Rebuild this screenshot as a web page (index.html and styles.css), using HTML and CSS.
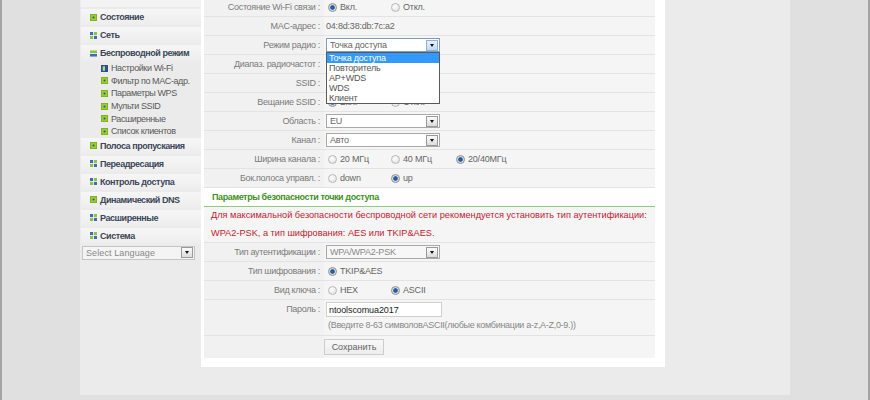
FILE: index.html
```html
<!DOCTYPE html>
<html lang="ru">
<head>
    <meta charset="UTF-8">
    <title>Настройки Wi-Fi</title>
    <link rel="stylesheet" href="styles.css">
</head>
<body>
    <svg class="defs" width="0" height="0">
        <symbol id="i-dot" viewBox="0 0 8 8">
            <rect x="0" y="0" width="8" height="8" fill="#9acd32"/>
            <rect x="0.5" y="0.5" width="7" height="7" fill="none" stroke="#7fb01e"/>
            <rect x="3" y="3" width="2" height="2" fill="#2b4fa0"/>
        </symbol>
        <symbol id="i-grid" viewBox="0 0 8 8">
            <rect x="0" y="0" width="3.5" height="3.5" fill="#3b6cc0"/>
            <rect x="4.5" y="0" width="3.5" height="3.5" fill="#8cc43c"/>
            <rect x="0" y="4.5" width="3.5" height="3.5" fill="#8cc43c"/>
            <rect x="4.5" y="4.5" width="3.5" height="3.5" fill="#3b6cc0"/>
        </symbol>
        <symbol id="i-open" viewBox="0 0 8 8">
            <rect x="0" y="0.5" width="8" height="3" fill="#8cc43c"/>
            <rect x="0" y="4.5" width="8" height="3" fill="#3b6cc0"/>
        </symbol>
        <symbol id="i-cur" viewBox="0 0 8 8">
            <rect x="0" y="0" width="8" height="8" fill="#2b4fa0"/>
            <rect x="2" y="1.5" width="2.5" height="5" fill="#c8e05a"/>
        </symbol>
    </svg>

    <div class="page">
        <div class="sidebar">
            <div class="menu-stub"></div>
            <a class="menu-item"><svg class="ico"><use href="#i-dot"/></svg>Состояние</a>
            <a class="menu-item"><svg class="ico"><use href="#i-grid"/></svg>Сеть</a>
            <a class="menu-item open"><svg class="ico"><use href="#i-open"/></svg>Беспроводной режим</a>
            <div class="submenu">
                <a class="sub-item"><svg class="ico"><use href="#i-cur"/></svg>Настройки Wi-Fi</a>
                <a class="sub-item"><svg class="ico"><use href="#i-dot"/></svg>Фильтр по MAC-адр.</a>
                <a class="sub-item"><svg class="ico"><use href="#i-dot"/></svg>Параметры WPS</a>
                <a class="sub-item"><svg class="ico"><use href="#i-dot"/></svg>Мульти SSID</a>
                <a class="sub-item"><svg class="ico"><use href="#i-dot"/></svg>Расширенные</a>
                <a class="sub-item"><svg class="ico"><use href="#i-dot"/></svg>Список клиентов</a>
            </div>
            <a class="menu-item"><svg class="ico"><use href="#i-dot"/></svg>Полоса пропускания</a>
            <a class="menu-item"><svg class="ico"><use href="#i-grid"/></svg>Переадресация</a>
            <a class="menu-item"><svg class="ico"><use href="#i-grid"/></svg>Контроль доступа</a>
            <a class="menu-item"><svg class="ico"><use href="#i-dot"/></svg>Динамический DNS</a>
            <a class="menu-item"><svg class="ico"><use href="#i-grid"/></svg>Расширенные</a>
            <a class="menu-item"><svg class="ico"><use href="#i-grid"/></svg>Система</a>
            <div class="lang-select">
                <span class="select-text">Select Language</span>
                <span class="select-btn"></span>
            </div>
        </div>

        <div class="content">
            <div class="card">
                <div class="form-row">
                    <div class="label">Состояние Wi-Fi связи :</div>
                    <div class="value">
                        <span class="opt"><span class="radio checked"></span>Вкл.</span>
                        <span class="opt"><span class="radio"></span>Откл.</span>
                    </div>
                </div>
                <div class="form-row">
                    <div class="label">MAC-адрес :</div>
                    <div class="value">04:8d:38:db:7c:a2</div>
                </div>
                <div class="form-row">
                    <div class="label">Режим радио :</div>
                    <div class="value">
                        <div class="select focused">
                            <span class="select-text">Точка доступа</span>
                            <span class="select-btn"></span>
                            <div class="dropdown">
                                <div class="dropdown-item selected">Точка доступа</div>
                                <div class="dropdown-item">Повторитель</div>
                                <div class="dropdown-item">AP+WDS</div>
                                <div class="dropdown-item">WDS</div>
                                <div class="dropdown-item">Клиент</div>
                            </div>
                        </div>
                    </div>
                </div>
                <div class="form-row">
                    <div class="label">Диапаз. радиочастот :</div>
                    <div class="value"></div>
                </div>
                <div class="form-row">
                    <div class="label">SSID :</div>
                    <div class="value"></div>
                </div>
                <div class="form-row">
                    <div class="label">Вещание SSID :</div>
                    <div class="value">
                        <span class="opt"><span class="radio checked"></span>Вкл.</span>
                        <span class="opt"><span class="radio"></span>Откл.</span>
                    </div>
                </div>
                <div class="form-row">
                    <div class="label">Область :</div>
                    <div class="value">
                        <div class="select"><span class="select-text">EU</span><span class="select-btn"></span></div>
                    </div>
                </div>
                <div class="form-row">
                    <div class="label">Канал :</div>
                    <div class="value">
                        <div class="select"><span class="select-text">Авто</span><span class="select-btn"></span></div>
                    </div>
                </div>
                <div class="form-row">
                    <div class="label">Ширина канала :</div>
                    <div class="value">
                        <span class="opt"><span class="radio"></span>20 МГц</span>
                        <span class="opt"><span class="radio"></span>40 МГц</span>
                        <span class="opt"><span class="radio checked"></span>20/40МГц</span>
                    </div>
                </div>
                <div class="form-row">
                    <div class="label">Бок.полоса управл. :</div>
                    <div class="value">
                        <span class="opt"><span class="radio"></span>down</span>
                        <span class="opt"><span class="radio checked"></span>up</span>
                    </div>
                </div>

                <div class="section-title">Параметры безопасности точки доступа</div>
                <div class="notice">
                    <p>Для максимальной безопасности беспроводной сети рекомендуется установить тип аутентификации:</p>
                    <p>WPA2-PSK, а тип шифрования: AES или TKIP&amp;AES.</p>
                </div>

                <div class="form-row">
                    <div class="label">Тип аутентификации :</div>
                    <div class="value">
                        <div class="select disabled"><span class="select-text">WPA/WPA2-PSK</span><span class="select-btn"></span></div>
                    </div>
                </div>
                <div class="form-row">
                    <div class="label">Тип шифрования :</div>
                    <div class="value">
                        <span class="opt"><span class="radio checked"></span>TKIP&amp;AES</span>
                    </div>
                </div>
                <div class="form-row">
                    <div class="label">Вид ключа :</div>
                    <div class="value">
                        <span class="opt"><span class="radio"></span>HEX</span>
                        <span class="opt"><span class="radio checked"></span>ASCII</span>
                    </div>
                </div>
                <div class="form-row tall">
                    <div class="label">Пароль :</div>
                    <div class="value stacked">
                        <input class="text-input" type="text" value="ntoolscomua2017">
                        <span class="hint">(Введите 8-63 символовASCII(любые комбинации a-z,A-Z,0-9.))</span>
                    </div>
                </div>
                <div class="form-row last">
                    <div class="label"></div>
                    <div class="value"><button class="btn">Сохранить</button></div>
                </div>
            </div>
        </div>
    </div>
</body>
</html>
```

FILE: styles.css
```css
html, body {
    margin: 0;
    padding: 0;
}
body {
    width: 866px;
    height: 400px;
    overflow: hidden;
    background-color: #e0e0e0;
    border-left: 2px solid #a4a4a4;
    border-right: 2px solid #a4a4a4;
    font-family: "Liberation Sans", Arial, sans-serif;
    font-size: 9px;
    color: #666;
}
.defs {
    position: absolute;
}
.page {
    display: flex;
    width: 710px;
    height: 395px;
    margin-left: 78px;
    background-color: #ebebeb;
}

/* left menu */
.sidebar {
    width: 120px;
    padding-left: 1px;
}
.menu-stub {
    height: 7px;
    margin-bottom: 2px;
    background-color: #f3f3f3;
}
.menu-item {
    display: flex;
    align-items: center;
    height: 16px;
    margin-bottom: 2px;
    padding-left: 9px;
    background: linear-gradient(#f6f6f6, #ededed);
    font-weight: bold;
    color: #3c4658;
    letter-spacing: -0.45px;
}
.menu-item.open {
    margin-bottom: 1px;
}
.ico {
    width: 7px;
    height: 7px;
    margin-right: 3px;
    flex-shrink: 0;
}
.submenu {
    padding-left: 20px;
}
.sub-item {
    display: flex;
    align-items: center;
    height: 12.6px;
    color: #5a5a5a;
    letter-spacing: -0.4px;
}
.lang-select {
    display: flex;
    align-items: center;
    width: 111px;
    height: 12px;
    margin: 1px 0 0 1px;
    border: 1px solid #c4c4c4;
    background-color: #f4f4f4;
    color: #888;
    font-size: 9px;
    letter-spacing: 0.1px;
}

/* main card */
.content {
    width: 464px;
    margin-top: -2px;
}
.card {
    background-color: #fff;
    padding: 0 10px 9px 3px;
}
.form-row {
    display: flex;
    height: 18px;
    border-bottom: 1px solid #e3e3e3;
    background-color: #f5f5f5;
}
.form-row.tall {
    height: 35px;
}
.form-row.last {
    height: 22px;
    border-bottom: none;
}
.label {
    width: 116px;
    padding-right: 4px;
    text-align: right;
    line-height: 18px;
    color: #7b7b7b;
    letter-spacing: -0.3px;
    background-color: #f1f1f1;
}
.value {
    flex: 1;
    display: flex;
    align-items: center;
    padding-left: 2px;
    color: #666;
    letter-spacing: -0.2px;
}
.value.stacked {
    flex-direction: column;
    align-items: flex-start;
    justify-content: flex-start;
    padding-top: 2px;
}
.opt {
    display: inline-flex;
    align-items: center;
    width: 65px;
}
.opt:first-child {
    padding-left: 2px;
    width: 63px;
}
.radio {
    width: 7px;
    height: 7px;
    margin-right: 3px;
    border: 1px solid #b8b8b8;
    border-radius: 50%;
    background: radial-gradient(circle at 40% 35%, #fff, #ddd);
}
.radio.checked {
    border-color: #8c8c8c;
    background: radial-gradient(circle, #1f6cc2 0, #1a4f96 1.8px, #c9d3de 2.6px, #eef1f5 4px);
}

/* fake selects */
.select {
    position: relative;
    display: flex;
    align-items: center;
    width: 112px;
    height: 12px;
    border: 1px solid #a9a9a9;
    background-color: #fff;
    color: #666;
}
.select.focused {
    border-color: #7f9db9;
}
.select.disabled {
    background-color: #f7f7f7;
    color: #8a8a8a;
}
.select-text {
    flex: 1;
    padding-left: 3px;
}
.select-btn {
    position: relative;
    width: 10px;
    height: 9px;
    margin-right: 1px;
    border: 1px solid #9a9a9a;
    background: linear-gradient(#fafafa, #dcdcdc);
}
.select.focused .select-btn {
    border-color: #8fb0d8;
    background: linear-gradient(#e9f3fc, #bed8f2);
}
.select-btn::after {
    content: "";
    position: absolute;
    left: 3px;
    top: 3px;
    border-left: 2px solid transparent;
    border-right: 2px solid transparent;
    border-top: 3px solid #111;
}
.dropdown {
    position: absolute;
    top: 13px;
    left: -1px;
    z-index: 2;
    width: 112px;
    border: 1px solid #5a5a5a;
    background-color: #fff;
    font-size: 9px;
    color: #555;
}
.dropdown-item {
    height: 10px;
    line-height: 10px;
    padding-left: 2px;
}
.dropdown-item.selected {
    background-color: #3399ff;
    color: #fff;
}

/* security part */
.section-title {
    height: 18px;
    line-height: 18px;
    padding-left: 8px;
    border-bottom: 1px solid #8fcb7e;
    font-weight: bold;
    color: #3f9224;
    letter-spacing: -0.4px;
}
.notice {
    height: 35px;
    padding-left: 7px;
    border-bottom: 1px solid #e3e3e3;
    background-color: #f5f5f5;
    color: #c4202c;
    font-size: 9.2px;
}
.notice p {
    margin: 0;
    height: 17.5px;
    line-height: 17.5px;
}
.text-input {
    box-sizing: border-box;
    width: 116px;
    height: 15px;
    margin: 0;
    padding: 0 2px;
    border: 1px solid #cfcfcf;
    font-family: "Liberation Sans", Arial, sans-serif;
    font-size: 9px;
    letter-spacing: -0.1px;
    color: #222;
    outline: none;
}
.hint {
    margin-top: 3px;
    padding-left: 2px;
    color: #888;
    font-size: 9px;
    letter-spacing: -0.3px;
}
.btn {
    width: 60px;
    height: 16px;
    margin-left: -2px;
    padding: 0;
    border: 1px solid #cdcdcd;
    background: linear-gradient(#f8f8f8, #ececec);
    font-family: "Liberation Sans", Arial, sans-serif;
    font-size: 9px;
    color: #666;
}
```
